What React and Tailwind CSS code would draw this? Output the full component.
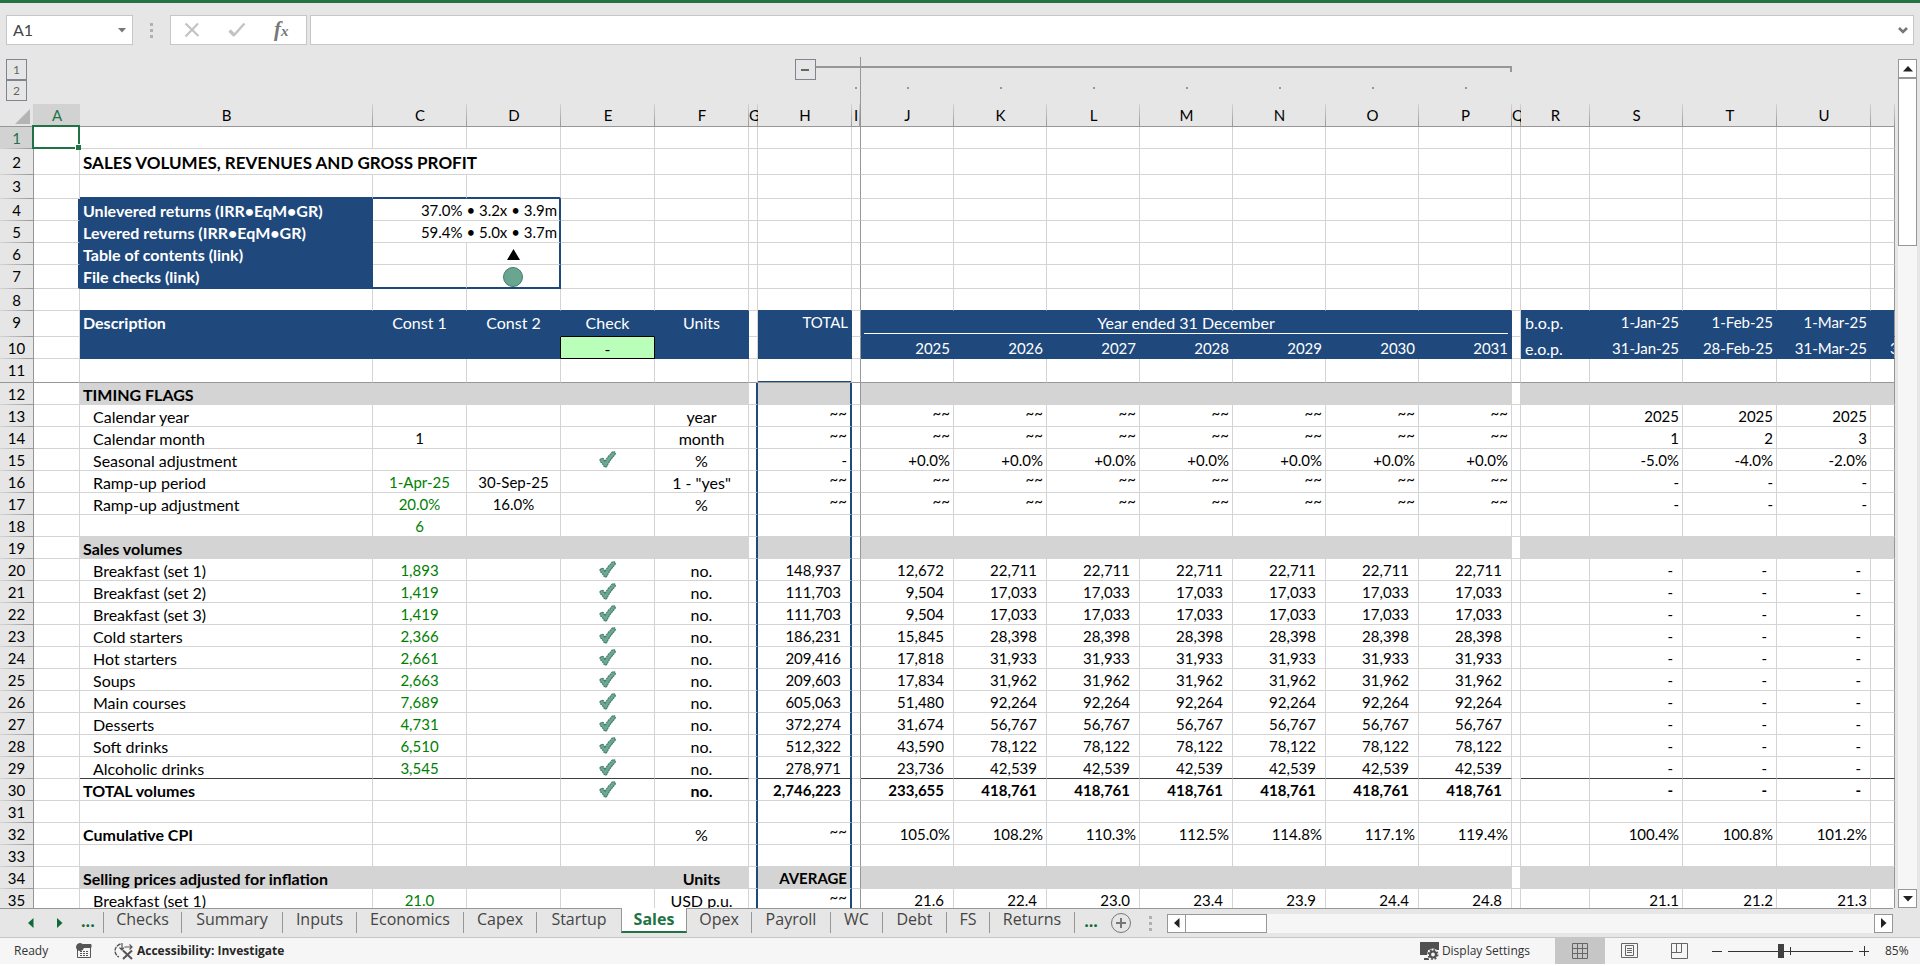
import React, { useState } from "react"
import clsx from "clsx"

const columns = [
  { id: "A", width: "w-[46px]" },
  { id: "B", width: "w-[293px]" },
  { id: "C", width: "w-[94px]" },
  { id: "D", width: "w-[94px]" },
  { id: "E", width: "w-[94px]" },
  { id: "F", width: "w-[94px]" },
  { id: "G", width: "w-[9px]" },
  { id: "H", width: "w-[94px]" },
  { id: "I", width: "w-[9px]" },
  { id: "J", width: "w-[93px]" },
  { id: "K", width: "w-[93px]" },
  { id: "L", width: "w-[93px]" },
  { id: "M", width: "w-[93px]" },
  { id: "N", width: "w-[93px]" },
  { id: "O", width: "w-[93px]" },
  { id: "P", width: "w-[93px]" },
  { id: "Q", width: "w-[9px]" },
  { id: "R", width: "w-[69px]" },
  { id: "S", width: "w-[93px]" },
  { id: "T", width: "w-[94px]" },
  { id: "U", width: "w-[94px]" },
  { id: "V", width: "" },
]

const yearCols = ["J", "K", "L", "M", "N", "O", "P"]
const monthCols = ["S", "T", "U"]
const spacers = ["A", "G", "I", "Q"]

const same = (value, count = 7) => Array(count).fill(value)
const tildes = same("~~")
const dashes = same("-", 3)

const volume = (n, label, daily, total, first, next) => ({
  n, label, indent: true, C: daily, check: true, F: "no.", H: total, wide: true,
  years: [first, ...same(next, 6)], months: dashes,
})

const rows = [
  { n: 1 },
  { n: 2, height: "h-[26px]", title: "SALES VOLUMES, REVENUES AND GROSS PROFIT" },
  { n: 3, height: "h-[24px]" },
  { n: 4, box: true, label: "Unlevered returns (IRR•EqM•GR)", returns: "37.0% • 3.2x • 3.9m" },
  { n: 5, box: true, label: "Levered returns (IRR•EqM•GR)", returns: "59.4% • 5.0x • 3.7m" },
  { n: 6, box: true, label: "Table of contents (link)", mark: "triangle" },
  { n: 7, box: true, height: "h-[24px]", label: "File checks (link)", mark: "circle" },
  { n: 8 },
  { n: 9, height: "h-[26px]", fill: "blue", label: "Description", boldLabel: true, C: "Const 1", D: "Const 2", E: "Check", F: "Units", H: "TOTAL", R: "b.o.p.", period: "Year ended 31 December", months: ["1-Jan-25", "1-Feb-25", "1-Mar-25"] },
  { n: 10, fill: "blue", E: "-", R: "e.o.p.", years: ["2025", "2026", "2027", "2028", "2029", "2030", "2031"], months: ["31-Jan-25", "28-Feb-25", "31-Mar-25"], V: "30-Apr-25" },
  { n: 11, height: "h-[24px]" },
  { n: 12, fill: "gray", label: "TIMING FLAGS", bold: true },
  { n: 13, label: "Calendar year", indent: true, F: "year", H: "~~", years: tildes, months: same("2025", 3) },
  { n: 14, label: "Calendar month", indent: true, C: "1", plain: true, F: "month", H: "~~", years: tildes, months: ["1", "2", "3"] },
  { n: 15, label: "Seasonal adjustment", indent: true, check: true, F: "%", H: "-", years: same("+0.0%"), months: ["-5.0%", "-4.0%", "-2.0%"] },
  { n: 16, label: "Ramp-up period", indent: true, C: "1-Apr-25", D: "30-Sep-25", F: '1 - "yes"', H: "~~", years: tildes, months: dashes },
  { n: 17, label: "Ramp-up adjustment", indent: true, C: "20.0%", D: "16.0%", F: "%", H: "~~", years: tildes, months: dashes },
  { n: 18, C: "6" },
  { n: 19, fill: "gray", label: "Sales volumes", bold: true },
  volume(20, "Breakfast (set 1)", "1,893", "148,937", "12,672", "22,711"),
  volume(21, "Breakfast (set 2)", "1,419", "111,703", "9,504", "17,033"),
  volume(22, "Breakfast (set 3)", "1,419", "111,703", "9,504", "17,033"),
  volume(23, "Cold starters", "2,366", "186,231", "15,845", "28,398"),
  volume(24, "Hot starters", "2,661", "209,416", "17,818", "31,933"),
  volume(25, "Soups", "2,663", "209,603", "17,834", "31,962"),
  volume(26, "Main courses", "7,689", "605,063", "51,480", "92,264"),
  volume(27, "Desserts", "4,731", "372,274", "31,674", "56,767"),
  volume(28, "Soft drinks", "6,510", "512,322", "43,590", "78,122"),
  volume(29, "Alcoholic drinks", "3,545", "278,971", "23,736", "42,539"),
  { ...volume(30, "TOTAL volumes", "", "2,746,223", "233,655", "418,761"), indent: false, bold: true },
  { n: 31 },
  { n: 32, label: "Cumulative CPI", boldLabel: true, F: "%", H: "~~", years: ["105.0%", "108.2%", "110.3%", "112.5%", "114.8%", "117.1%", "119.4%"], months: ["100.4%", "100.8%", "101.2%"] },
  { n: 33 },
  { n: 34, fill: "gray", label: "Selling prices adjusted for inflation", bold: true, F: "Units", H: "AVERAGE" },
  { n: 35, label: "Breakfast (set 1)", indent: true, C: "21.0", F: "USD p.u.", H: "~~", years: ["21.6", "22.4", "23.0", "23.4", "23.9", "24.4", "24.8"], wideYears: true, months: ["21.1", "21.2", "21.3"] },
]

const tabs = [
  { name: "Checks", width: "w-[79px]" },
  { name: "Summary", width: "w-[101px]" },
  { name: "Inputs", width: "w-[74px]" },
  { name: "Economics", width: "w-[107px]" },
  { name: "Capex", width: "w-[73px]" },
  { name: "Startup", width: "w-[84px]" },
  { name: "Sales", width: "w-[66px]" },
  { name: "Opex", width: "w-[65px]" },
  { name: "Payroll", width: "w-[79px]" },
  { name: "WC", width: "w-[52px]" },
  { name: "Debt", width: "w-[64px]" },
  { name: "FS", width: "w-[43px]" },
  { name: "Returns", width: "w-[85px]" },
]

const CheckMark = () => (
  <svg viewBox="0 0 17 17" className="w-[17px] h-[17px] mx-auto" aria-label="OK">
    <path
      d="M1 8.6 2.8 7.2 4.4 7.8 6 10.8C7.6 7.4 10 4.4 12.2 2.4L13.2 1 15.4.8 16.4 1.8 16 3.6 14.6 5.2C12 8 9.6 11.6 8 15L6.6 16.2 5.2 15.4C4.2 13.4 3 11.8 1.4 10.8Z"
      fill="#6ea893"
      stroke="#3f7c68"
      strokeWidth="1.2"
      strokeDasharray="2 .6"
      strokeLinejoin="round"
    />
  </svg>
)

const Triangle = ({ dir, className }) => {
  const paths = {
    up: "M0 5.5 5 0 10 5.5Z",
    down: "M0 0H10L5 5.5Z",
    left: "M5.5 0V10L0 5Z",
    right: "M0 0V10L5.5 5Z",
  }
  const flat = dir === "up" || dir === "down"
  return (
    <svg width={flat ? 10 : 6} height={flat ? 6 : 10} className={className} fill="currentColor">
      <path d={paths[dir]} />
    </svg>
  )
}

const GripDots = () => (
  <span className="flex flex-col gap-[3px]">
    <span className="w-[3px] h-[3px] bg-[#b0b0b0]" />
    <span className="w-[3px] h-[3px] bg-[#b0b0b0]" />
    <span className="w-[3px] h-[3px] bg-[#b0b0b0]" />
  </span>
)

const FormulaBar = () => (
  <div className="flex h-[54px] pt-3 px-[6px]">
    <div className="flex items-center w-[127px] h-[30px] bg-white border border-[#c6c6c6]">
      <input aria-label="Name box" defaultValue="A1" className="w-[104px] pl-[6px] text-[16px] text-[#444] outline-none" />
      <button aria-label="Open name list" className="flex flex-1 justify-center text-[#777]">
        <svg width="8" height="5" fill="currentColor"><path d="M0 0H8L4 4.5Z" /></svg>
      </button>
    </div>
    <div className="flex items-center justify-center w-[37px] h-[30px]"><GripDots /></div>
    <div className="flex items-center gap-7 pl-[13px] w-[137px] h-[30px] bg-white border border-[#c6c6c6]">
      <button aria-label="Cancel">
        <svg width="16" height="16" stroke="#c3c3c3" strokeWidth="2.2" fill="none"><path d="M1.5 1.5 14.5 14M14 1.5 1.5 14.5" /></svg>
      </button>
      <button aria-label="Enter">
        <svg width="18" height="16" stroke="#c3c3c3" fill="none"><path d="M1.5 8.5 6.5 13.5" strokeWidth="3.2" /><path d="M5.5 13.8 16.5 1.5" strokeWidth="2.4" /></svg>
      </button>
      <button aria-label="Insert function" className="font-['Liberation_Serif',serif] italic font-bold text-[21px] leading-[24px] text-[#777]">
        f<span className="text-[15px]">x</span>
      </button>
    </div>
    <div className="flex flex-1 items-center ml-[3px] h-[30px] bg-white border border-[#c6c6c6]">
      <input aria-label="Formula" className="flex-1 px-2 outline-none" />
      <button aria-label="Expand formula bar" className="mr-[5px] text-[#777]">
        <svg width="10" height="7" fill="none" stroke="currentColor" strokeWidth="2.6"><path d="M1 1 5 5 9 1" /></svg>
      </button>
    </div>
  </div>
)

const OutlineCell = ({ id }) => {
  if (id === "H") {
    return (
      <td className="p-0 pt-[2px] align-top">
        <div className="flex">
          <span className="flex-1" />
          <button aria-label="Collapse group" className="flex items-center justify-center w-[21px] h-[21px] border border-[#80848f]">
            <span className="w-2 h-[2px] bg-[#666]" />
          </button>
          <span className="flex-1 mt-[7px] h-[2px] bg-[#979797]" />
        </div>
      </td>
    )
  }
  const inGroup = id === "I" || yearCols.includes(id)
  return (
    <td className={clsx("p-0 pt-[9px] align-top", id === "I" && "border-r border-[#979797]")}>
      {inGroup && <div className={clsx("border-t-2 border-[#979797]", id === "P" ? "h-[6px] border-r-2" : "h-[2px]")} />}
    </td>
  )
}

const HeaderRows = () => (
  <thead>
    <tr className="h-[23px]">
      <td className="p-0 pt-[2px] pl-[6px] align-top">
        <button className="block w-[21px] h-[21px] border border-[#80848f] text-[12px] leading-[19px] text-[#666]">1</button>
      </td>
      {columns.map((col) => <OutlineCell key={col.id} id={col.id} />)}
    </tr>
    <tr className="h-[24px]">
      <td className="p-0 pl-[6px] align-top">
        <button className="block w-[21px] h-[21px] border border-[#80848f] text-[12px] leading-[19px] text-[#666]">2</button>
      </td>
      {columns.map((col) => (
        <td key={col.id} className={clsx("p-0 pt-[7px] align-top", col.id === "I" && "border-r border-[#979797]")}>
          {(col.id === "I" || yearCols.includes(col.id)) && <div className="mx-auto w-[2px] h-[2px] bg-[#979797]" />}
        </td>
      ))}
    </tr>
    <tr className="h-[23px]">
      <th className="p-0 border-b border-r border-b-[#979797] border-r-[#d0d0d0]">
        <button aria-label="Select all" className="block ml-auto mr-[3px] mt-[2px]">
          <svg width="15" height="15" fill="#b4b4b4"><path d="M15 0V15H0Z" /></svg>
        </button>
      </th>
      {columns.map((col) => (
        <th
          key={col.id}
          scope="col"
          className={clsx(
            "p-0 font-normal border-b border-[#979797] overflow-hidden whitespace-nowrap",
            col.id === "A" ? "bg-[#d2d2d2] text-[#217346]" : "bg-[linear-gradient(#d4d4d4,#979797)] bg-[length:1px_100%] bg-right bg-no-repeat",
            (col.id === "G" || col.id === "Q") && "text-left",
            col.id === "I" && "border-r"
          )}
        >
          {col.id === "V" ? "" : col.id}
        </th>
      ))}
    </tr>
  </thead>
)

// fill of a cell, or undefined where the sheet shows through
const cellFill = (row, id) => {
  if (!row || spacers.includes(id)) return undefined
  if (row.box) return id === "B" ? "blue" : undefined
  return row.fill
}

const cellBorders = (row, next, id) => {
  const fill = cellFill(row, id)
  const nextFill = cellFill(next, id)
  const boxEdge = (row.n === 3 || row.n === 7) && ["B", "C", "D"].includes(id)
  const totalLine = row.n === 29 && !spacers.includes(id)

  let bottom = "border-b border-b-[#d4d4d4]"
  if (row.n === 11) bottom = "border-b border-b-[#979797]"
  else if (boxEdge) bottom = "border-b-2 border-b-[#1f497d]"
  else if (totalLine) bottom = "border-b border-b-[#404040]"
  else if ((row.n === 9 || row.n === 10) && id === "E") bottom = "border-b border-b-black"
  else if (fill === "blue" || nextFill === "blue") bottom = "border-b border-b-[#1f497d]"

  let right = "border-r border-r-[#d4d4d4]"
  if (id === "I" || id === "V") right = "border-r border-r-[#979797]"
  else if ((id === "G" || id === "H") && row.n >= 12) right = "border-r-2 border-r-[#1f497d]"
  else if (row.box && (id === "A" || id === "D")) right = "border-r-2 border-r-[#1f497d]"
  else if (row.n === 10 && (id === "D" || id === "E")) right = "border-r border-r-black"
  else if (fill === "blue") right = "border-r border-r-[#1f497d]"

  let color = "bg-white"
  if (row.n === 10 && id === "E") color = "bg-[#b9ffb9]"
  else if (fill === "blue") color = "bg-[#1f497d] text-white"
  else if (fill === "gray") color = "bg-[#d4d4d4]"

  return clsx(bottom, right, color, row.n === 11 && id === "H" && "shadow-[inset_0_-1px_#1f497d]")
}

const cellContent = (row, id) => {
  if (id === "B") return row.label
  if (id === "D" && row.mark === "triangle") {
    return (
      <a href="#contents" aria-label="Table of contents" className="block">
        <svg width="13" height="11" className="mx-auto mt-1"><path d="M6.5 0 13 11H0Z" /></svg>
      </a>
    )
  }
  if (id === "D" && row.mark === "circle") {
    return (
      <a href="#checks" aria-label="File checks" className="block">
        <svg width="20" height="20" className="mx-auto"><circle cx="10" cy="10" r="9.5" fill="#6aa58f" stroke="#3f7c68" /></svg>
      </a>
    )
  }
  if (id === "E" && row.check) return <CheckMark />
  if (yearCols.includes(id)) return row.years?.[yearCols.indexOf(id)]
  if (monthCols.includes(id)) return row.months?.[monthCols.indexOf(id)]
  return row[id]
}

const cellText = (row, id) => {
  if (id === "B") return row.indent ? "pl-[13px] text-left text-[16px]" : "pl-[3px] text-left text-[16px]"
  if (id === "F") return "text-center text-[16px]"
  if (id === "R") return "pl-1 text-left text-[16px]"
  if (id === "V") return "pl-[19px] text-left"
  if (["C", "D", "E"].includes(id)) return row.fill ? "text-center text-[16px]" : "text-center"
  const wide = row.wide || (row.wideYears && yearCols.includes(id))
  return wide ? "pr-[9px] text-right" : "pr-[3px] text-right"
}

const SheetRow = ({ row, next }) => {
  const cells = []
  for (const { id } of columns) {
    let colSpan = 1
    if (row.title && (id === "C" || id === "D")) continue
    if (row.returns && id === "D") continue
    if (row.period && yearCols.includes(id) && id !== "J") continue
    if (row.title && id === "B") colSpan = 3
    if (row.returns && id === "C") colSpan = 2
    if (row.period && id === "J") colSpan = 7

    let content = cellContent(row, id)
    if (colSpan === 2) content = row.returns
    if (colSpan === 7) content = <div className="mx-[3px] h-[21px] border-b border-white text-center text-[16px]">{row.period}</div>

    let text = cellText(row, id)
    if (colSpan === 2) text = "pr-[2px] text-right"
    if (colSpan === 7) text = ""

    let line = "pt-[2px] leading-[19px]"
    if (content === "~~") line = "leading-[17px]"

    if (colSpan === 3) {
      content = row.title
      text = "pl-[3px] text-left text-[17px]"
      line = "pt-[2px] leading-[23px]"
    }

    cells.push(
      <td
        key={id}
        colSpan={colSpan}
        className={clsx(
          "align-top whitespace-nowrap",
          line,
          text,
          cellBorders(row, next, colSpan === 2 ? "D" : id),
          (row.bold || row.title || (id === "B" && (row.box || row.boldLabel))) && "font-bold",
          id === "C" && !row.fill && !row.plain && !row.returns && "text-[#008000]",
          row.n === 1 && id === "A" ? "relative" : "overflow-hidden"
        )}
      >
        {row.n === 1 && id === "A" && (
          <span className="absolute -top-[2px] -left-[2px] -right-px -bottom-px border-2 border-[#217346]">
            <span className="absolute -right-[3px] -bottom-[3px] w-[6px] h-[6px] border-t border-l border-white bg-[#217346]" />
          </span>
        )}
        {content}
      </td>
    )
  }

  return (
    <tr className={row.height ?? "h-[22px]"}>
      <th
        scope="row"
        className={clsx(
          "pt-[2px] border-r border-r-[#979797] font-normal leading-[19px]",
          row.n === 11 ? "border-b border-b-[#979797]" : "bg-[linear-gradient(90deg,#d4d4d4,#979797)] bg-[length:100%_1px] bg-bottom bg-no-repeat pb-px",
          row.n === 1 ? "bg-[#d2d2d2] text-[#217346]" : "bg-[#e6e6e6]",
          row.n === 2 ? "align-middle" : "align-top"
        )}
      >
        {row.n}
      </th>
      {cells}
    </tr>
  )
}

const VerticalScroll = () => (
  <div className="flex flex-col mx-[3px] mt-[2px] w-[19px] bg-[#f6f6f6]">
    <button aria-label="Scroll up" className="flex items-center justify-center h-[19px] bg-white border border-[#979797] text-[#222]">
      <Triangle dir="up" />
    </button>
    <div className="h-[168px] bg-white border border-[#979797]" />
    <div className="flex-1" />
    <button aria-label="Scroll down" className="flex items-center justify-center h-[19px] bg-white border border-[#979797] text-[#222]">
      <Triangle dir="down" />
    </button>
  </div>
)

const SheetTabs = ({ active, onSelect }) => (
  <div className="flex h-[29px] font-['Open_Sans',sans-serif] text-[16px] text-[#444]">
    <div className="flex flex-none items-center w-[103px] border-t border-[#979797] text-[#0e6a38]">
      <button aria-label="Previous sheets" className="ml-[28px]"><Triangle dir="left" /></button>
      <button aria-label="Next sheets" className="ml-[23px]"><Triangle dir="right" /></button>
      <button aria-label="More sheets" className="ml-[18px] pb-1 font-bold">...</button>
    </div>
    {tabs.map((tab, i) => {
      const isActive = tab.name === active
      return (
        <button
          key={tab.name}
          onClick={() => onSelect(tab.name)}
          className={clsx(
            "flex flex-col flex-none h-[25px] whitespace-nowrap",
            tab.width,
            isActive
              ? "bg-white border-x border-b-2 border-x-[#979797] border-b-[#217346] font-bold text-[#217346]"
              : "border-t border-[#979797]"
          )}
        >
          <span
            className={clsx(
              "block w-full",
              isActive ? "leading-[22px]" : "mt-[3px] h-[21px] leading-[14px]",
              i === 0 && "border-l border-[#979797]",
              !isActive && tabs[i + 1]?.name !== active && "border-r border-[#979797]"
            )}
          >
            {tab.name}
          </span>
        </button>
      )
    })}
    <div className="flex flex-1 items-center border-t border-[#979797]">
      <button aria-label="More sheets" className="w-[32px] pb-1 font-bold text-[#0e6a38]">...</button>
      <button aria-label="New sheet" className="ml-1">
        <svg width="20" height="20" fill="none" stroke="#777"><circle cx="10" cy="10" r="9.5" /><path d="M10 5V15M5 10H15" strokeWidth="2" /></svg>
      </button>
      <span className="ml-[18px] mr-[15px]"><GripDots /></span>
      <div className="flex flex-1 h-[19px] bg-[#f6f6f6]">
        <button aria-label="Scroll left" className="flex items-center justify-center w-[19px] bg-white border border-[#979797] text-[#222]">
          <Triangle dir="left" />
        </button>
        <div className="w-[81px] bg-white border border-l-0 border-[#979797]" />
        <div className="flex-1" />
        <button aria-label="Scroll right" className="flex items-center justify-center w-[19px] bg-white border border-[#979797] text-[#222]">
          <Triangle dir="right" />
        </button>
      </div>
    </div>
    <div className="w-[27px]" />
  </div>
)

const StatusBar = () => {
  const [zoom, setZoom] = useState(42)
  return (
    <footer className="flex flex-none items-center h-[27px] border-t border-[#c6c6c6] bg-[#f6f6f6] font-['Open_Sans',sans-serif] text-[12px] text-[#333]">
      <span className="ml-[14px] w-[62px]">Ready</span>
      <button aria-label="Record macro">
        <svg width="16" height="16" fill="none" stroke="#555">
          <path d="M1.5 6V14.5H14.5V2H7" />
          <path d="M7 1.5H15V4.5H7Z" fill="#555" />
          <circle cx="4" cy="4" r="3.5" fill="#555" />
          <path d="M4 8.5H6M7 8.5H9M10 8.5H12M4 10.5H6M7 10.5H9M10 10.5H12M4 12.5H6M7 12.5H9M10 12.5H12" />
        </svg>
      </button>
      <button className="flex items-center gap-[3px] ml-[22px] font-bold text-[#262626]">
        <svg width="20" height="18" fill="none" stroke="#555">
          <path d="M6.5 2C-.5 4.5-.5 12 5 15" strokeWidth="1.4" strokeDasharray="4 1" />
          <path d="M8 1V8M5.5 5.5 8 8 10 5.5M10.5 5H18M15.5 2.5 18 5 15.5 7.5" strokeWidth="1.2" />
          <path d="M9 8.5 18 17M18 8.5 9 17" strokeWidth="2" />
        </svg>
        Accessibility: Investigate
      </button>
      <span className="flex-1" />
      <button className="flex items-center gap-[3px] mr-[25px]">
        <svg width="19" height="18" fill="none">
          <path d="M0 0H19V8H8V13H0Z" fill="#505050" />
          <path d="M4 17H9" stroke="#505050" strokeWidth="2" />
          <circle cx="13" cy="12.5" r="6" fill="#f6f6f6" />
          <circle cx="13" cy="12.5" r="3" stroke="#505050" strokeWidth="2.2" />
          <circle cx="13" cy="12.5" r="4.6" stroke="#505050" strokeWidth="1.8" strokeDasharray="1.8 1.8" />
        </svg>
        Display Settings
      </button>
      <button aria-label="Normal view" className="flex items-center justify-center w-[50px] h-[26px] bg-[#c6c6c6]">
        <svg width="16" height="16" fill="none" stroke="#666"><path d="M.5.5H15.5V15.5H.5ZM.5 5.5H15.5M.5 10.5H15.5M5.5.5V15.5M10.5.5V15.5" /></svg>
      </button>
      <button aria-label="Page layout" className="flex items-center justify-center w-[49px]">
        <svg width="17" height="16" fill="none" stroke="#666"><path d="M.5.5H16.5V14.5H.5ZM4.5 2.5H12.5V12.5H4.5ZM6 5.5H11M6 7.5H11M6 9.5H11" /></svg>
      </button>
      <button aria-label="Page break preview" className="flex items-center justify-center w-[50px]">
        <svg width="17" height="16" fill="none" stroke="#666"><path d="M.5.5H16.5V15.5H.5ZM.5 9.5H10.5V.5M5.5.5V9.5" /></svg>
      </button>
      <button aria-label="Zoom out" className="ml-2 w-[10px] h-px bg-[#333]" />
      <div className="relative flex items-center ml-[6px] w-[125px]">
        <span className="absolute left-[62px] w-px h-2 bg-[#333]" />
        <input
          type="range"
          aria-label="Zoom"
          value={zoom}
          onChange={(e) => setZoom(e.target.value)}
          className="w-full h-[14px] appearance-none bg-[linear-gradient(#333,#333)] bg-[length:100%_1px] bg-center bg-no-repeat [&::-webkit-slider-thumb]:appearance-none [&::-webkit-slider-thumb]:w-[6px] [&::-webkit-slider-thumb]:h-[14px] [&::-webkit-slider-thumb]:bg-[#404040]"
        />
      </div>
      <button aria-label="Zoom in" className="ml-[6px]">
        <svg width="10" height="10" stroke="#333"><path d="M5.5 0V10M0 5.5H10" /></svg>
      </button>
      <span className="ml-[16px] w-[35px]">85%</span>
    </footer>
  )
}

export default function App() {
  const [sheet, setSheet] = useState("Sales")

  return (
    <div className="flex flex-col h-screen overflow-hidden bg-[#e6e6e6] border-t-[3px] border-t-[#217346] border-b-2 border-b-white font-['Lato',sans-serif] text-[15px] text-black">
      <FormulaBar />

      <div className="flex flex-1 min-h-0">
        <div className="flex-1 min-w-0 overflow-hidden">
          <table className="w-full table-fixed border-separate border-spacing-0 leading-[21px]">
            <colgroup>
              <col className="w-[34px]" />
              {columns.map((col) => <col key={col.id} className={col.width} />)}
            </colgroup>
            <HeaderRows />
            <tbody>
              {rows.map((row, i) => <SheetRow key={row.n} row={row} next={rows[i + 1]} />)}
            </tbody>
          </table>
        </div>
        <VerticalScroll />
      </div>

      <SheetTabs active={sheet} onSelect={setSheet} />
      <StatusBar />
    </div>
  )
}
